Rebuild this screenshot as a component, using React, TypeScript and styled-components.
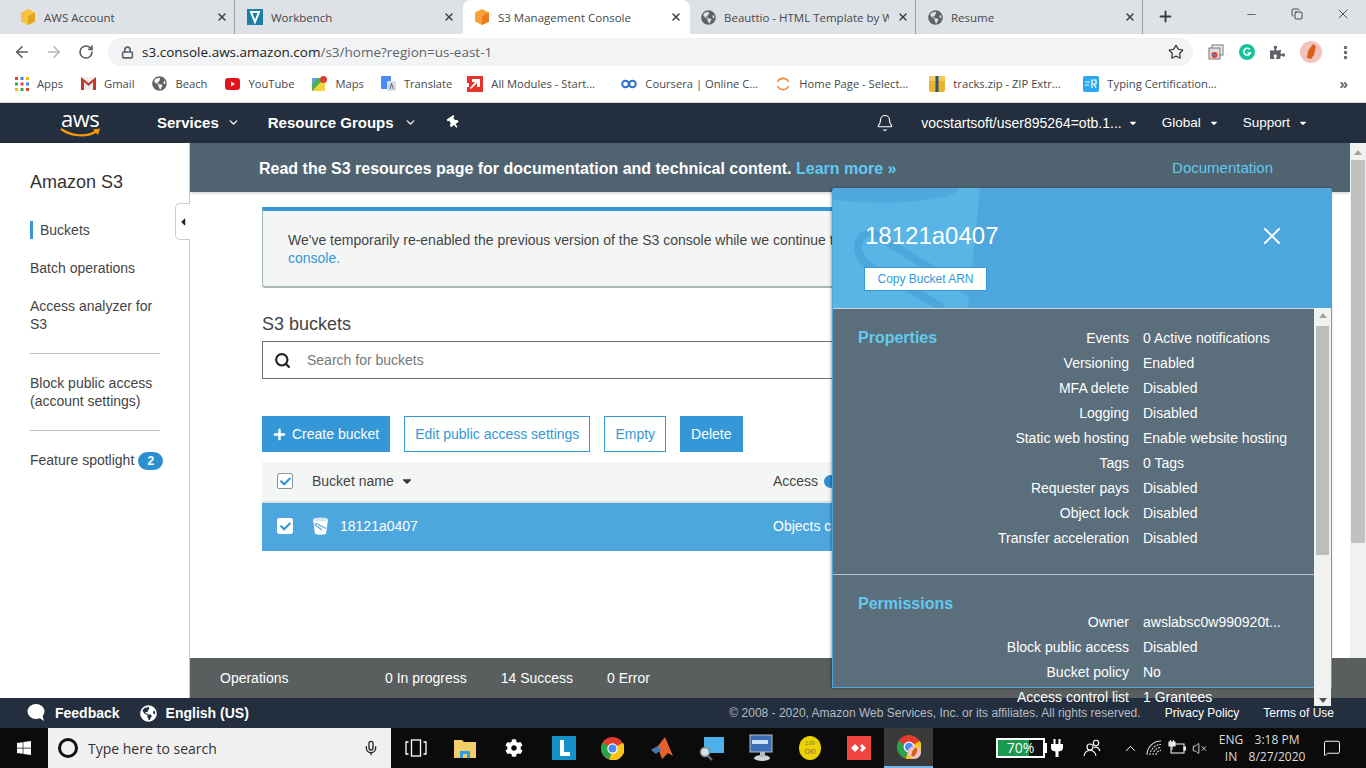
import React from "react";
import styled, { createGlobalStyle } from "styled-components";
import { ArrowLeft, ArrowRight, RotateCw, Lock, Star, Plus, Minus, X, Copy, Bell, Search, MoreVertical, ChevronDown, ChevronUp, Mic, VolumeX, MessageSquare } from "lucide-react";
import { FaGlobeAmericas, FaThumbtack, FaPuzzlePiece, FaWindows, FaCog, FaCaretDown, FaCaretLeft, FaCheck, FaPlus } from "react-icons/fa";

const Global = createGlobalStyle`
  html, body { margin: 0; padding: 0; background: #fff; overflow: hidden; }
  * { box-sizing: border-box; }
`;

const chromeFont = `"Open Sans", "Noto Sans", sans-serif`;
const awsFont = `"Liberation Sans", Arial, sans-serif`;
const skyText = "#62caf0";

const Screen = styled.div`
  position: relative;
  width: 1366px;
  height: 768px;
  display: flex;
  flex-direction: column;
  overflow: hidden;
  font-family: ${awsFont};
`;

/* ---------- browser chrome ---------- */
const TabStrip = styled.div`
  height: 34px;
  background: #dee1e6;
  display: flex;
  align-items: stretch;
  padding-left: 9px;
  font-family: ${chromeFont};
  flex: none;
`;
const Tab = styled.div<{ $active?: boolean; $sep?: boolean }>`
  width: 227px;
  flex: none;
  display: flex;
  align-items: center;
  padding: 0 8px 0 11px;
  gap: 8px;
  font-size: 11.5px;
  color: #45484c;
  background: ${(p) => (p.$active ? "#fff" : "transparent")};
  border-radius: ${(p) => (p.$active ? "8px 8px 0 0" : "0")};
  box-shadow: ${(p) => (p.$sep ? "inset -1px 0 0 #dee1e6, inset -2px 0 0 #9a9da1" : "none")};
`;
const TabTitle = styled.span`
  flex: 1;
  white-space: nowrap;
  overflow: hidden;
`;
const TabClose = styled(X)`
  flex: none;
  color: #3c4043;
  width: 12px;
  height: 12px;
  stroke-width: 3;
`;
const NewTab = styled(Plus)`
  color: #35383c;
  margin: 8px 0 0 13px;
  width: 17px;
  height: 17px;
  stroke-width: 2.6;
`;
const WindowControls = styled.div`
  margin-left: auto;
  display: flex;
  align-items: center;
  height: 28px;
  color: #222;
`;
const WindowButton = styled.div`
  width: 46px;
  display: flex;
  justify-content: center;
`;
const Toolbar = styled.div`
  height: 36px;
  background: #fff;
  display: flex;
  align-items: center;
  padding-left: 6px;
  flex: none;
  color: #5f6368;
  font-family: ${chromeFont};
`;
const NavIcon = styled.div<{ $dim?: boolean }>`
  width: 32px;
  display: flex;
  justify-content: center;
  color: ${(p) => (p.$dim ? "#b6b8bb" : "#5a5e62")};
`;
const Omnibox = styled.div`
  margin-left: 6px;
  width: 1085px;
  height: 28px;
  border-radius: 14px;
  background: #f1f3f4;
  display: flex;
  align-items: center;
  padding: 0 9px 0 13px;
  gap: 8px;
  font-size: 13.5px;
  color: #5f6368;
`;
const UrlHost = styled.span`
  color: #202124;
`;
const UrlStar = styled(Star)`
  margin-left: auto;
  color: #444;
`;
const ToolbarEnd = styled.div`
  display: flex;
  align-items: center;
  margin-left: 8px;
  flex: 1;
  justify-content: space-around;
  padding: 0 5px 0 0;
`;
const Bookmarks = styled.div`
  height: 33px;
  background: #fff;
  border-bottom: 1px solid #d5d5d5;
  display: flex;
  align-items: center;
  padding: 0 15px 5px 15px;
  flex: none;
  font-family: ${chromeFont};
  font-size: 11.2px;
  color: #45484c;
`;
const Bookmark = styled.div<{ $fixed?: boolean; $after?: number }>`
  display: flex;
  align-items: center;
  gap: 8px;
  white-space: nowrap;
  flex: none;
  width: ${(p) => (p.$fixed ? "154px" : "auto")};
  margin-right: ${(p) => (p.$fixed ? 0 : p.$after ?? 18)}px;
`;
const BookmarkMore = styled.div`
  margin-left: auto;
  color: #666;
  font-size: 14px;
  font-weight: 700;
  margin-right: 3px;
`;

/* ---------- AWS nav ---------- */
const TopNav = styled.div`
  height: 40px;
  background: #232f3e;
  color: #fff;
  display: flex;
  align-items: center;
  flex: none;
  padding-bottom: 1px;
`;
const LogoWrap = styled.div`
  position: relative;
  width: 42px;
  height: 30px;
  margin: 0 55px 0 60px;
  flex: none;
`;
const LogoText = styled.span`
  position: absolute;
  left: 1px;
  top: -2px;
  font-family: "Open Sans", sans-serif;
  font-size: 22px;
  line-height: 24px;
  letter-spacing: -0.5px;
  color: #fff;
`;
const LogoSmile = styled.svg`
  position: absolute;
  left: 0;
  top: 19px;
`;
const NavMenu = styled.div<{ $after: number; $inner: number }>`
  display: flex;
  align-items: center;
  font-size: 15px;
  font-weight: 700;
  gap: ${(p) => p.$inner}px;
  margin-right: ${(p) => p.$after}px;
  white-space: nowrap;
`;
const NavPin = styled(FaThumbtack)`
  transform: rotate(-35deg);
`;
const NavRight = styled.div`
  display: flex;
  align-items: center;
  margin-left: auto;
  font-size: 13.5px;
  white-space: nowrap;
  padding-right: 58px;
`;
const NavBell = styled(Bell)`
  margin-right: 27px;
`;
const NavRightItem = styled.div<{ $after?: number; $wide?: boolean }>`
  display: flex;
  align-items: center;
  gap: ${(p) => (p.$wide ? 6 : 8)}px;
  margin-right: ${(p) => p.$after ?? 0}px;
  ${(p) => (p.$wide ? "font-size: 14px;" : "")}
`;

/* ---------- page body ---------- */
const Body = styled.div`
  flex: 1;
  min-height: 0;
  display: flex;
`;
const Sidebar = styled.aside`
  width: 190px;
  flex: none;
  position: relative;
  border-right: 1px solid #c9c9c9;
  padding: 29px 29px 0 30px;
  color: #444;
  font-size: 14px;
  line-height: 18px;
  background: #fff;
`;
const SideTitle = styled.div`
  font-size: 18px;
  line-height: 20px;
  color: #333;
  margin-bottom: 29px;
`;
const SideItem = styled.div<{ $selected?: boolean; $nowrap?: boolean }>`
  margin-bottom: 20px;
  ${(p) => (p.$selected ? "border-left: 3px solid #3498d8; padding-left: 7px;" : "")}
  ${(p) => (p.$nowrap ? "white-space: nowrap;" : "")}
`;
const SideRule = styled.hr`
  border: 0;
  border-top: 1px solid #bbb;
  margin: 0 0 20px;
  width: 130px;
`;
const SideBadge = styled.span`
  display: inline-block;
  width: 25px;
  height: 18px;
  line-height: 18px;
  border-radius: 9px;
  background: #2e8fd0;
  color: #fff;
  text-align: center;
  font-size: 12px;
  font-weight: 700;
  margin-left: 4px;
`;
const CollapseTab = styled.div`
  position: absolute;
  right: -1px;
  top: 60px;
  width: 15px;
  height: 37px;
  background: #fff;
  border: 1px solid #ccc;
  border-right: 0;
  border-radius: 5px 0 0 5px;
  display: flex;
  align-items: center;
  justify-content: center;
  color: #222;
  font-size: 12px;
`;
const Main = styled.main`
  flex: 1;
  min-width: 0;
  display: flex;
  flex-direction: column;
`;
const Upper = styled.div`
  flex: 1;
  min-height: 0;
  display: flex;
`;
const UpperPage = styled.div`
  flex: 1;
  min-width: 0;
  display: flex;
  flex-direction: column;
`;
const Banner = styled.div`
  height: 49px;
  background: #4f6371;
  color: #fff;
  display: flex;
  align-items: center;
  padding: 2px 77px 0 69px;
  font-size: 16px;
  font-weight: 700;
  flex: none;
  box-shadow: 0 1px 3px rgba(0,0,0,.2);
  white-space: nowrap;
`;
const BannerLink = styled.span`
  color: ${skyText};
`;
const BannerDoc = styled.span`
  margin: 0 0 3px auto;
  color: ${skyText};
  font-size: 15px;
  font-weight: 400;
`;
const Content = styled.div`
  flex: 1;
  padding: 15px 71px 0 72px;
  min-height: 0;
  overflow: hidden;
  color: #444;
`;
const Notice = styled.div`
  height: 81px;
  border: 1px solid #aab7b8;
  border-top: 4px solid #3498d8;
  border-bottom: 2px solid #aab7b8;
  border-radius: 0 0 3px 3px;
  background: #f4f6f6;
  padding: 20px 25px;
  font-size: 14px;
  line-height: 18px;
  white-space: nowrap;
`;
const NoticeLink = styled.span`
  color: #3498d8;
`;
const SectionTitle = styled.h2`
  margin: 26px 0 7px;
  font-size: 18px;
  line-height: 20px;
  font-weight: 400;
  color: #444;
`;
const SearchBox = styled.div`
  height: 38px;
  border: 1px solid #687078;
  display: flex;
  align-items: center;
  padding-left: 11px;
  gap: 16px;
  font-size: 14px;
  color: #777;
`;
const ButtonRow = styled.div`
  display: flex;
  gap: 14px;
  margin-top: 37px;
`;
const ActionButton = styled.div<{ $outline?: boolean }>`
  height: 36px;
  display: flex;
  align-items: center;
  gap: 6px;
  padding: 0 10px;
  font-size: 14px;
  background: ${(p) => (p.$outline ? "#fff" : "#3498d8")};
  color: ${(p) => (p.$outline ? "#3498d8" : "#fff")};
  border: 1px solid #3498d8;
`;
const TableHead = styled.div`
  height: 41px;
  margin-top: 10px;
  background: #f4f6f6;
  border-bottom: 2px solid #dde0e0;
  display: flex;
  align-items: center;
  padding: 0 0 1px 15px;
  font-size: 14px;
  color: #444;
`;
const TableRow = styled.div`
  height: 48px;
  background: #4da6dc;
  color: #fff;
  display: flex;
  align-items: center;
  padding: 0 0 2px 15px;
  font-size: 14px;
  white-space: nowrap;
`;
const Check = styled.div<{ $plain?: boolean }>`
  width: 16px;
  height: 16px;
  flex: none;
  border: 1px solid ${(p) => (p.$plain ? "#8a9499" : "#fff")};
  border-radius: 2px;
  background: #fff;
  display: flex;
  align-items: center;
  justify-content: center;
  color: #3498d8;
  font-size: 11px;
`;
const NameCell = styled.div<{ $gap: number }>`
  width: 461px;
  flex: none;
  display: flex;
  align-items: center;
  margin-left: 19px;
  gap: ${(p) => p.$gap}px;
`;
const InfoDot = styled.span`
  display: inline-block;
  width: 13px;
  height: 13px;
  border-radius: 50%;
  background: #2e8fd0;
  margin-left: 6px;
`;
const AccessCell = styled.div`
  display: flex;
  align-items: center;
`;
const OpsBar = styled.div`
  height: 40px;
  background: #5a5e5f;
  color: #fff;
  display: flex;
  align-items: center;
  padding-left: 30px;
  font-size: 14px;
  flex: none;
`;
const OpsLabel = styled.span`
  width: 165px;
`;
const OpsStat = styled.span`
  margin-right: 34px;
`;
const PageScroll = styled.div`
  width: 16px;
  flex: none;
  background: #f1f1f1;
  display: flex;
  flex-direction: column;
  align-items: center;
  padding: 7px 1px 115px;
`;
const PageThumb = styled.div`
  flex: 1;
  width: 100%;
  margin-top: 5px;
  background: #c1c1c1;
`;
const ScrollArrow = styled.div<{ $down?: boolean }>`
  width: 0;
  height: 0;
  flex: none;
  border-left: 4px solid transparent;
  border-right: 4px solid transparent;
  ${(p) => (p.$down ? "border-top: 5px solid #505050;" : "border-bottom: 5px solid #a3a3a3;")}
`;

/* ---------- detail panel ---------- */
const Panel = styled.section`
  position: absolute;
  left: 832px;
  top: 188px;
  width: 500px;
  height: 500px;
  background: #5a6e7b;
  border: 1px solid #4da6dc;
  border-top: 0;
  border-radius: 3px 3px 0 0;
  color: #fff;
  z-index: 5;
  box-shadow: -1px 0 3px rgba(0,0,0,.35);
`;
const PanelHead = styled.header`
  position: relative;
  height: 121px;
  background: #4da6dc;
  border-bottom: 1px solid #cfd6da;
  padding: 33px 31px 0;
  overflow: hidden;
`;
const PanelArt = styled.svg`
  position: absolute;
  left: 0;
  top: 0;
`;
const PanelTitle = styled.div`
  position: relative;
  font-size: 24px;
  line-height: 30px;
  margin-left: 1px;
`;
const CopyButton = styled.div`
  position: relative;
  width: 123px;
  height: 24px;
  margin-top: 16px;
  background: #fff;
  border: 1px solid #3498d8;
  color: #3498d8;
  font-size: 12px;
  text-align: center;
  line-height: 22px;
`;
const PanelClose = styled(X)`
  position: absolute;
  right: 45px;
  top: 34px;
  color: #fff;
  stroke-width: 1.6;
`;
const PanelSection = styled.div<{ $first?: boolean }>`
  position: relative;
  padding: ${(p) => (p.$first ? "16px" : "34px")} 0 0 25px;
  ${(p) => (p.$first ? "border-bottom: 1px solid #b9c3c9; height: 266px;" : "")}
`;
const PanelSectionTitle = styled.div`
  position: absolute;
  left: 25px;
  top: 19px;
  color: ${skyText};
  font-size: 16px;
  font-weight: 700;
  line-height: 20px;
`;
const DetailRow = styled.div`
  display: grid;
  grid-template-columns: 271px 1fr;
  column-gap: 14px;
  height: 25px;
  align-items: center;
  font-size: 14px;
  white-space: nowrap;
`;
const DetailLabel = styled.span`
  text-align: right;
`;
const PanelScroll = styled.div`
  position: absolute;
  left: 481px;
  top: 120px;
  width: 17px;
  height: 398px;
  background: #f1f1f1;
  display: flex;
  flex-direction: column;
  align-items: center;
  justify-content: space-between;
  padding: 5px 0 3px;
  z-index: 6;
`;
const PanelThumb = styled.div`
  position: absolute;
  left: 2px;
  top: 18px;
  width: 13px;
  height: 229px;
  background: #bdbdbd;
`;

/* ---------- footer ---------- */
const Footer = styled.footer`
  height: 30px;
  background: #232f3e;
  color: #fff;
  display: flex;
  align-items: center;
  padding: 0 32px 0 27px;
  flex: none;
  font-size: 12px;
`;
const FooterLink = styled.div<{ $after?: number }>`
  display: flex;
  align-items: center;
  gap: 9px;
  font-size: 14px;
  font-weight: 700;
  margin-right: ${(p) => p.$after ?? 0}px;
`;
const Copyright = styled.span`
  margin-left: auto;
  color: #b5bcc4;
  margin-right: 24px;
`;
const FooterSmall = styled.span<{ $after?: number }>`
  margin-right: ${(p) => p.$after ?? 0}px;
`;

/* ---------- taskbar ---------- */
const Taskbar = styled.div`
  height: 40px;
  background: #0b0b0b;
  color: #fff;
  display: flex;
  align-items: stretch;
  flex: none;
  font-family: ${chromeFont};
`;
const StartButton = styled.div`
  width: 48px;
  display: flex;
  align-items: center;
  justify-content: center;
  font-size: 16px;
`;
const TaskSearch = styled.div`
  width: 343px;
  background: #f0f0f0;
  display: flex;
  align-items: center;
  padding: 0 12px 0 10px;
  color: #333;
  font-size: 14px;
`;
const TaskMic = styled(Mic)`
  margin-left: auto;
`;
const CortanaRing = styled.div`
  width: 20px;
  height: 20px;
  border-radius: 50%;
  border: 3px solid #111;
  margin-right: 10px;
`;
const TaskSlot = styled.div<{ $active?: boolean }>`
  width: 49.3px;
  flex: none;
  display: flex;
  align-items: center;
  justify-content: center;
  background: ${(p) => (p.$active ? "#3a3a3a" : "transparent")};
  border-bottom: ${(p) => (p.$active ? "2px solid #76b9ed" : "none")};
`;
const Tray = styled.div`
  margin-left: auto;
  display: flex;
  align-items: center;
  padding-right: 10px;
`;
const BatteryBox = styled.div`
  position: relative;
  width: 49px;
  height: 20px;
  border: 2px solid #fff;
  background: linear-gradient(to right, #1a9a4e 70%, #111 70%);
  font-size: 14px;
  line-height: 15px;
  text-align: center;
  margin-right: 3px;
  &::after {
    content: "";
    position: absolute;
    right: -4px;
    top: 3px;
    width: 2px;
    height: 10px;
    background: #fff;
  }
`;
const TraySlot = styled.div<{ $w: number }>`
  width: ${(p) => p.$w}px;
  display: flex;
  justify-content: center;
  align-items: center;
  flex: none;
`;
const TrayText = styled.div<{ $w: number; $ml?: number }>`
  width: ${(p) => p.$w}px;
  margin-left: ${(p) => p.$ml ?? 0}px;
  text-align: center;
  font-size: 12px;
  line-height: 17px;
  color: #ddd;
  flex: none;
  white-space: nowrap;
`;

/* ---------- small drawings ---------- */
const Globe = () => <FaGlobeAmericas size={15} color="#5f6368" />;

const BoxFav = ({ c1, c2 }: { c1: string; c2: string }) => (
  <svg width="16" height="16" viewBox="0 0 16 16">
    <path d="M8 0 L15 3.5 V12.5 L8 16 L1 12.5 V3.5 Z" fill={c1} />
    <path d="M8 7 L15 3.5 V12.5 L8 16 Z" fill={c2} />
  </svg>
);
const VFav = () => (
  <svg width="16" height="16" viewBox="0 0 16 16">
    <rect width="16" height="16" fill="#1a7fa6" />
    <path d="M4 3 H12 L8 13 Z" fill="none" stroke="#fff" strokeWidth="2" />
  </svg>
);
const AppsIcon = () => (
  <svg width="14" height="14" viewBox="0 0 14 14">
    {[0, 5.5, 11].flatMap((y, r) =>
      [0, 5.5, 11].map((x, c) => (
        <rect key={`${r}${c}`} x={x} y={y} width="3" height="3" fill={["#ea4335", "#4285f4", "#fbbc05", "#34a853", "#ea4335", "#4285f4", "#fbbc05", "#34a853", "#ea4335"][r * 3 + c]} />
      ))
    )}
  </svg>
);
const GmailIcon = () => (
  <svg width="15" height="13" viewBox="0 0 15 13">
    <rect width="15" height="13" fill="#eee" />
    <path d="M0 0 V13 H3 V5 L7.5 9 L12 5 V13 H15 V0 L7.5 6 Z" fill="#c5392b" />
  </svg>
);
const YtIcon = () => (
  <svg width="15" height="12" viewBox="0 0 15 12">
    <rect width="15" height="12" rx="3" fill="#e8101a" />
    <path d="M6 3.5 L10 6 L6 8.5 Z" fill="#fff" />
  </svg>
);
const MapsIcon = () => (
  <svg width="15" height="15" viewBox="0 0 15 15">
    <rect y="2" width="13" height="13" fill="#4caf50" />
    <path d="M0 15 L13 2 V15 Z" fill="#f5d33f" />
    <path d="M0 2 H6 L0 8 Z" fill="#6a9ff0" />
    <circle cx="11.5" cy="3.5" r="3.5" fill="#d8402f" />
  </svg>
);
const TranslateIcon = () => (
  <svg width="15" height="15" viewBox="0 0 15 15">
    <rect width="10" height="13" rx="1" fill="#4a8af4" />
    <rect x="6" y="5" width="9" height="10" rx="1" fill="#d7dce3" />
    <path d="M9 13 L10.5 7.5 L12.5 13" fill="none" stroke="#667" />
  </svg>
);
const ModulesIcon = () => (
  <svg width="16" height="16" viewBox="0 0 16 16">
    <rect width="16" height="16" fill="#e5322d" />
    <path d="M5 3 H13 V11 H10 V7 L4 13 L3 12 L8 6 H5 Z" fill="#fff" />
    <rect x="0" y="7" width="2" height="4" fill="#fff" />
  </svg>
);
const CourseraIcon = () => (
  <svg width="16" height="10" viewBox="0 0 16 10">
    <circle cx="4.5" cy="5" r="3.3" fill="none" stroke="#2a73cc" strokeWidth="2" />
    <circle cx="11.5" cy="5" r="3.3" fill="none" stroke="#2a73cc" strokeWidth="2" />
  </svg>
);
const HomeIcon = () => (
  <svg width="16" height="16" viewBox="0 0 16 16">
    <path d="M2.5 6 A6 6 0 0 1 13.5 6" fill="none" stroke="#ef8a3c" strokeWidth="1.6" />
    <path d="M2.5 10 A6 6 0 0 0 13.5 10" fill="none" stroke="#ef8a3c" strokeWidth="1.6" />
  </svg>
);
const ZipIcon = () => (
  <svg width="16" height="16" viewBox="0 0 16 16">
    <rect width="16" height="16" rx="2" fill="#e8b52c" />
    <rect x="0" y="0" width="16" height="5" fill="#f2cf5a" />
    <rect x="6.5" width="3" height="16" fill="#31527a" />
  </svg>
);
const FrIcon = () => (
  <svg width="16" height="16" viewBox="0 0 16 16">
    <rect width="16" height="16" rx="2" fill="#29a8f0" />
    <path d="M2 6 H7 M2 9 H6" stroke="#fff" strokeWidth="1" />
    <path d="M9 12 V4 H13 V8 H9 M11 8 L13 12" stroke="#fff" strokeWidth="1.2" fill="none" />
  </svg>
);
const ChromeLogo = ({ size = 22, badge }: { size?: number; badge?: boolean }) => (
  <svg width={size} height={size} viewBox="0 0 22 22">
    <circle cx="11" cy="11" r="11" fill="#e33b2e" />
    <path d="M11 11 L21 5.5 A11 11 0 0 1 8 21.6 Z" fill="#f5c518" />
    <path d="M11 11 L8 21.6 A11 11 0 0 1 1.5 5.5 Z" fill="#2aa24a" />
    <circle cx="11" cy="11" r="5" fill="#fff" />
    <circle cx="11" cy="11" r="3.8" fill="#4a8af4" />
    {badge && (
      <g>
        <circle cx="16" cy="16" r="6" fill="#f3c2bd" />
        <path d="M17 11 L19 13 L17 18 L15 20 L13 19 L14 15 Z" fill="#d9601a" />
      </g>
    )}
  </svg>
);
const GrammarlyIcon = () => (
  <svg width="16" height="16" viewBox="0 0 16 16">
    <circle cx="8" cy="8" r="8" fill="#15c39a" />
    <path d="M11 5.5 A3.5 3.5 0 1 0 11.5 9 H8.5" fill="none" stroke="#fff" strokeWidth="1.6" />
  </svg>
);
const FoxAvatar = () => (
  <svg width="22" height="22" viewBox="0 0 22 22">
    <circle cx="11" cy="11" r="11" fill="#f3c2bd" />
    <path d="M13 3 L16 5 L14 14 L11 18 L7 17 L8 10 Z" fill="#d9601a" />
  </svg>
);
const CastIcon = () => (
  <svg width="16" height="16" viewBox="0 0 16 16">
    <rect x="4" y="1" width="11" height="10" fill="#eee" stroke="#777" />
    <rect x="1" y="4" width="11" height="11" fill="#ddd" stroke="#777" />
    <circle cx="6.5" cy="11" r="3" fill="#e33b2e" />
    <circle cx="6.5" cy="11" r="1.2" fill="#4a8af4" />
  </svg>
);
const BucketMini = () => (
  <svg width="17" height="18" viewBox="0 0 17 18">
    <path d="M1 2.5 H16 L14 17 Q8.5 18.5 3 17 Z" fill="#fff" />
    <ellipse cx="8.5" cy="2.5" rx="7.5" ry="2" fill="#d5e9f7" />
    <path d="M14 11.5 L4.5 6.5 Q2.5 6.5 3.5 8.5 L10 13" fill="none" stroke="#4da6dc" strokeWidth="1.1" />
  </svg>
);
const BubbleIcon = () => (
  <svg width="19" height="18" viewBox="0 0 19 18">
    <ellipse cx="9" cy="7.5" rx="8.5" ry="7.5" fill="#fff" />
    <path d="M11 13 L17 17 L15 10 Z" fill="#fff" />
  </svg>
);
const TaskViewIcon = () => (
  <svg width="22" height="18" viewBox="0 0 22 18" fill="none" stroke="#fff" strokeWidth="1.3">
    <rect x="6.5" y="1" width="9" height="16" />
    <path d="M3.5 3 H1 V15 H3.5 M18.5 3 H21 V15 H18.5" />
  </svg>
);
const FolderIcon = () => (
  <svg width="22" height="20" viewBox="0 0 22 20">
    <path d="M0 2 H8 L10 4 H22 V20 H0 Z" fill="#f2cd68" />
    <rect x="6" y="13" width="10" height="7" fill="#2f9ee0" />
    <rect x="9" y="16" width="4" height="4" fill="#f2cd68" />
  </svg>
);
const LTile = () => (
  <svg width="24" height="24" viewBox="0 0 24 24">
    <rect width="24" height="24" fill="#1591c9" />
    <path d="M8 4 H12 V16 H18 V20 H8 Z" fill="#fff" />
  </svg>
);
const MatlabIcon = () => (
  <svg width="24" height="24" viewBox="0 0 24 24">
    <path d="M1 14 L8 10 L15 1 L23 20 L18 17 L12 23 L9 15 Z" fill="#e5622b" />
    <path d="M1 14 L8 10 L11 14 L6 18 Z" fill="#3f79b5" />
  </svg>
);
const SearchPcIcon = () => (
  <svg width="26" height="26" viewBox="0 0 26 26">
    <rect x="6" y="2" width="20" height="16" fill="#4db0ea" />
    <circle cx="7" cy="17" r="4.5" fill="#cde4f2" stroke="#888" strokeWidth="1.5" />
    <path d="M10 21 L14 25" stroke="#777" strokeWidth="2" />
  </svg>
);
const MonitorIcon = () => (
  <svg width="24" height="28" viewBox="0 0 24 28">
    <rect x="1" y="1" width="22" height="17" fill="#3d6db6" stroke="#b8bdc5" />
    <rect x="3" y="6" width="16" height="4" fill="#cfe0f5" />
    <ellipse cx="13" cy="24" rx="8" ry="3" fill="#cfd2d6" />
    <rect x="11" y="18" width="5" height="5" fill="#b5b8bc" />
  </svg>
);
const OkBadge = () => (
  <svg width="22" height="24" viewBox="0 0 22 24">
    <ellipse cx="11" cy="12" rx="11" ry="12" fill="#ecd200" />
    <text x="11" y="9" fontSize="5" textAnchor="middle" fill="#665">2.00</text>
    <text x="11" y="18" fontSize="7" textAnchor="middle" fill="#665">OK!</text>
  </svg>
);
const RedTile = () => (
  <svg width="24" height="24" viewBox="0 0 24 24">
    <rect width="24" height="24" fill="#f0443e" />
    <path d="M8 8 L12 12 L8 16 L4 12 Z M15 8 L19 12 L15 16 L13 14 L15 12 L13 10 Z" fill="#fff" />
  </svg>
);
const PlugIcon = () => (
  <svg width="12" height="18" viewBox="0 0 12 18" fill="#fff">
    <rect x="2.5" y="0" width="2" height="6" />
    <rect x="7.5" y="0" width="2" height="6" />
    <path d="M0 5 H12 V9 Q12 12 7.5 12.5 V18 H4.5 V12.5 Q0 12 0 9 Z" />
  </svg>
);
const PeopleIcon = () => (
  <svg width="18" height="18" viewBox="0 0 18 18" fill="none" stroke="#fff" strokeWidth="1.1">
    <circle cx="7" cy="8" r="3" />
    <path d="M1 17 Q2 11.5 7 11.5 Q12 11.5 13 17" />
    <circle cx="13" cy="4" r="2.7" />
    <path d="M11 8.5 Q15 7 17 12" />
  </svg>
);
const WifiIcon = () => (
  <svg width="18" height="16" viewBox="0 0 18 16" fill="none" stroke="#d8d8d8" strokeWidth="1.1">
    <path d="M2 15 A14 14 0 0 1 16 1" />
    <path d="M5 15 A11 11 0 0 1 16 4.5" strokeDasharray="2 1" />
    <path d="M8 15 A8 8 0 0 1 16 7.5" strokeDasharray="2 1" />
    <path d="M11 15 A5 5 0 0 1 16 10.5" strokeDasharray="2 1" />
  </svg>
);
const TrayBatteryIcon = () => (
  <svg width="18" height="16" viewBox="0 0 18 16" fill="none" stroke="#e8e8e8" strokeWidth="1.1">
    <rect x="3" y="4" width="13" height="9" />
    <rect x="16" y="7" width="2" height="3" fill="#e8e8e8" />
    <path d="M1 2 H7 V6 H1 Z" fill="#e8e8e8" />
    <path d="M2.5 0 V2 M5.5 0 V2 M4 6 V10" />
  </svg>
);

const properties = [
  ["Events", "0 Active notifications"],
  ["Versioning", "Enabled"],
  ["MFA delete", "Disabled"],
  ["Logging", "Disabled"],
  ["Static web hosting", "Enable website hosting"],
  ["Tags", "0 Tags"],
  ["Requester pays", "Disabled"],
  ["Object lock", "Disabled"],
  ["Transfer acceleration", "Disabled"],
];
const permissions = [
  ["Owner", "awslabsc0w990920t..."],
  ["Block public access", "Disabled"],
  ["Bucket policy", "No"],
  ["Access control list", "1 Grantees"],
];

export default function App() {
  return (
    <Screen>
      <Global />
      <TabStrip>
        <Tab $sep><BoxFav c1="#f6c344" c2="#e2a61c" /><TabTitle>AWS Account</TabTitle><TabClose /></Tab>
        <Tab><VFav /><TabTitle>Workbench</TabTitle><TabClose /></Tab>
        <Tab $active><BoxFav c1="#f9a13a" c2="#ea7a1f" /><TabTitle>S3 Management Console</TabTitle><TabClose /></Tab>
        <Tab $sep><Globe /><TabTitle>Beauttio - HTML Template by W</TabTitle><TabClose /></Tab>
        <Tab $sep><Globe /><TabTitle>Resume</TabTitle><TabClose /></Tab>
        <NewTab />
        <WindowControls>
          <WindowButton><Minus size={13} strokeWidth={1.2} /></WindowButton>
          <WindowButton><Copy size={12} strokeWidth={1.6} /></WindowButton>
          <WindowButton><X size={16} strokeWidth={1.1} /></WindowButton>
        </WindowControls>
      </TabStrip>
      <Toolbar>
        <NavIcon><ArrowLeft size={18} strokeWidth={2.2} /></NavIcon>
        <NavIcon $dim><ArrowRight size={18} strokeWidth={2.2} /></NavIcon>
        <NavIcon><RotateCw size={16} strokeWidth={2.4} /></NavIcon>
        <Omnibox>
          <Lock size={13} strokeWidth={3} />
          <span><UrlHost>s3.console.aws.amazon.com</UrlHost>/s3/home?region=us-east-1</span>
          <UrlStar size={16} strokeWidth={2} />
        </Omnibox>
        <ToolbarEnd>
          <CastIcon />
          <GrammarlyIcon />
          <FaPuzzlePiece size={15} color="#5f6368" />
          <FoxAvatar />
          <MoreVertical size={17} strokeWidth={3} />
        </ToolbarEnd>
      </Toolbar>
      <Bookmarks>
        <Bookmark><AppsIcon /><span>Apps</span></Bookmark>
        <Bookmark><GmailIcon /><span>Gmail</span></Bookmark>
        <Bookmark><Globe /><span>Beach</span></Bookmark>
        <Bookmark><YtIcon /><span>YouTube</span></Bookmark>
        <Bookmark $after={17}><MapsIcon /><span>Maps</span></Bookmark>
        <Bookmark $after={15}><TranslateIcon /><span>Translate</span></Bookmark>
        <Bookmark $fixed><ModulesIcon /><span>All Modules - Start...</span></Bookmark>
        <Bookmark $fixed><CourseraIcon /><span>Coursera | Online C...</span></Bookmark>
        <Bookmark $fixed><HomeIcon /><span>Home Page - Select...</span></Bookmark>
        <Bookmark $fixed><ZipIcon /><span>tracks.zip - ZIP Extr...</span></Bookmark>
        <Bookmark $fixed><FrIcon /><span>Typing Certification...</span></Bookmark>
        <BookmarkMore>»</BookmarkMore>
      </Bookmarks>
      <TopNav>
        <LogoWrap>
          <LogoText>aws</LogoText>
          <LogoSmile width="41" height="12" viewBox="0 0 41 12">
            <path d="M1 2 C11 9 26 11 37 4" fill="none" stroke="#f90" strokeWidth="2.2" />
            <path d="M33 2.5 L40 1.5 L38 8 Z" fill="#f90" />
          </LogoSmile>
        </LogoWrap>
        <NavMenu $after={28} $inner={8}>Services <ChevronDown size={13} strokeWidth={2.4} /></NavMenu>
        <NavMenu $after={30} $inner={10}>Resource Groups <ChevronDown size={13} strokeWidth={2.4} /></NavMenu>
        <NavPin size={13} color="#fff" />
        <NavRight>
          <NavBell size={18} strokeWidth={1.5} />
          <NavRightItem $after={24} $wide>vocstartsoft/user895264=otb.1... <FaCaretDown size={10} /></NavRightItem>
          <NavRightItem $after={24}>Global <FaCaretDown size={10} /></NavRightItem>
          <NavRightItem>Support <FaCaretDown size={10} /></NavRightItem>
        </NavRight>
      </TopNav>
      <Body>
        <Sidebar>
          <SideTitle>Amazon S3</SideTitle>
          <SideItem $selected>Buckets</SideItem>
          <SideItem>Batch operations</SideItem>
          <SideItem>Access analyzer for S3</SideItem>
          <SideRule />
          <SideItem>Block public access (account settings)</SideItem>
          <SideRule />
          <SideItem $nowrap>Feature spotlight<SideBadge>2</SideBadge></SideItem>
          <CollapseTab><FaCaretLeft /></CollapseTab>
        </Sidebar>
        <Main>
          <Upper>
            <UpperPage>
              <Banner>
                Read the S3 resources page for documentation and technical content.&nbsp;<BannerLink>Learn more »</BannerLink>
                <BannerDoc>Documentation</BannerDoc>
              </Banner>
              <Content>
                <Notice>
                  We've temporarily re-enabled the previous version of the S3 console while we continue to improve the new S3<br />
                  <NoticeLink>console.</NoticeLink>
                </Notice>
                <SectionTitle>S3 buckets</SectionTitle>
                <SearchBox><Search size={17} strokeWidth={3} color="#222" />Search for buckets</SearchBox>
                <ButtonRow>
                  <ActionButton><FaPlus size={13} />Create bucket</ActionButton>
                  <ActionButton $outline>Edit public access settings</ActionButton>
                  <ActionButton $outline>Empty</ActionButton>
                  <ActionButton>Delete</ActionButton>
                </ButtonRow>
                <TableHead>
                  <Check $plain><FaCheck /></Check>
                  <NameCell $gap={6}>Bucket name <FaCaretDown size={14} color="#333" /></NameCell>
                  <AccessCell>Access<InfoDot /></AccessCell>
                </TableHead>
                <TableRow>
                  <Check><FaCheck /></Check>
                  <NameCell $gap={11}><BucketMini />18121a0407</NameCell>
                  <span>Objects can be public</span>
                </TableRow>
              </Content>
            </UpperPage>
            <PageScroll><ScrollArrow /><PageThumb /></PageScroll>
          </Upper>
          <OpsBar>
            <OpsLabel>Operations</OpsLabel>
            <OpsStat>0 In progress</OpsStat>
            <OpsStat>14 Success</OpsStat>
            <OpsStat>0 Error</OpsStat>
          </OpsBar>
        </Main>
      </Body>
      <Footer>
        <FooterLink $after={20}><BubbleIcon />Feedback</FooterLink>
        <FooterLink><FaGlobeAmericas size={17} />English (US)</FooterLink>
        <Copyright>© 2008 - 2020, Amazon Web Services, Inc. or its affiliates. All rights reserved.</Copyright>
        <FooterSmall $after={24}>Privacy Policy</FooterSmall>
        <FooterSmall>Terms of Use</FooterSmall>
      </Footer>
      <Taskbar>
        <StartButton><FaWindows /></StartButton>
        <TaskSearch>
          <CortanaRing />
          Type here to search
          <TaskMic size={16} color="#222" />
        </TaskSearch>
        <TaskSlot><TaskViewIcon /></TaskSlot>
        <TaskSlot><FolderIcon /></TaskSlot>
        <TaskSlot><FaCog size={18} /></TaskSlot>
        <TaskSlot><LTile /></TaskSlot>
        <TaskSlot><ChromeLogo size={23} /></TaskSlot>
        <TaskSlot><MatlabIcon /></TaskSlot>
        <TaskSlot><SearchPcIcon /></TaskSlot>
        <TaskSlot><MonitorIcon /></TaskSlot>
        <TaskSlot><OkBadge /></TaskSlot>
        <TaskSlot><RedTile /></TaskSlot>
        <TaskSlot $active><ChromeLogo size={24} badge /></TaskSlot>
        <Tray>
          <BatteryBox>70%</BatteryBox>
          <TraySlot $w={18}><PlugIcon /></TraySlot>
          <TraySlot $w={52}><PeopleIcon /></TraySlot>
          <TraySlot $w={24}><ChevronUp size={17} strokeWidth={1.4} /></TraySlot>
          <TraySlot $w={24}><WifiIcon /></TraySlot>
          <TraySlot $w={22}><TrayBatteryIcon /></TraySlot>
          <TraySlot $w={22}><VolumeX size={15} strokeWidth={1.3} /></TraySlot>
          <TrayText $w={30} $ml={6}>ENG<br />IN</TrayText>
          <TrayText $w={62}>3:18 PM<br />8/27/2020</TrayText>
          <TraySlot $w={48}><MessageSquare size={18} strokeWidth={1.3} /></TraySlot>
        </Tray>
      </Taskbar>
      <Panel>
        <PanelHead>
          <PanelArt width="498" height="120" viewBox="0 0 498 120">
            <path d="M0 0 H147 L135 120 H0 Z" fill="#58b5e6" />
            <ellipse cx="50" cy="0" rx="76" ry="15" fill="#4fa9de" />
            <path d="M142 108 L45 48 Q28 40 25 58 Q25 72 40 80 L110 120" fill="none" stroke="#4da6dc" strokeWidth="8" />
          </PanelArt>
          <PanelTitle>18121a0407</PanelTitle>
          <CopyButton>Copy Bucket ARN</CopyButton>
          <PanelClose size={28} />
        </PanelHead>
        <PanelSection $first>
          <PanelSectionTitle>Properties</PanelSectionTitle>
          {properties.map(([k, v]) => (
            <DetailRow key={k}><DetailLabel>{k}</DetailLabel><span>{v}</span></DetailRow>
          ))}
        </PanelSection>
        <PanelSection>
          <PanelSectionTitle>Permissions</PanelSectionTitle>
          {permissions.map(([k, v]) => (
            <DetailRow key={k}><DetailLabel>{k}</DetailLabel><span>{v}</span></DetailRow>
          ))}
        </PanelSection>
        <PanelScroll>
          <ScrollArrow />
          <PanelThumb />
          <ScrollArrow $down />
        </PanelScroll>
      </Panel>
    </Screen>
  );
}
